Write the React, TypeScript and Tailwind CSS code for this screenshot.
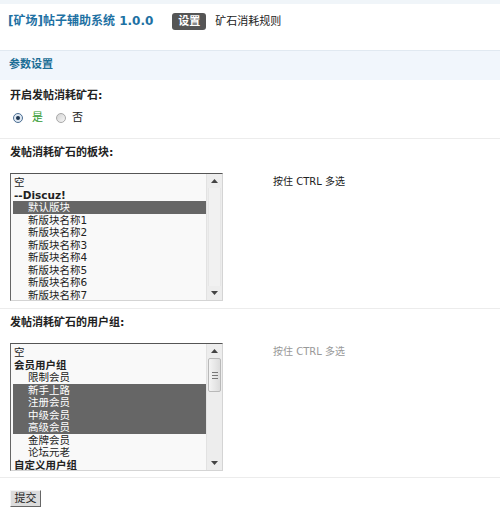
import React from "react";

type Opt = { label: string; indent?: boolean; bold?: boolean; selected?: boolean };

const forums: Opt[] = [
  { label: "空" },
  { label: "--Discuz!", bold: true },
  { label: "默认版块", indent: true, selected: true },
  { label: "新版块名称1", indent: true },
  { label: "新版块名称2", indent: true },
  { label: "新版块名称3", indent: true },
  { label: "新版块名称4", indent: true },
  { label: "新版块名称5", indent: true },
  { label: "新版块名称6", indent: true },
  { label: "新版块名称7", indent: true },
];

const groups: Opt[] = [
  { label: "空" },
  { label: "会员用户组", bold: true },
  { label: "限制会员", indent: true },
  { label: "新手上路", indent: true, selected: true },
  { label: "注册会员", indent: true, selected: true },
  { label: "中级会员", indent: true, selected: true },
  { label: "高级会员", indent: true, selected: true },
  { label: "金牌会员", indent: true },
  { label: "论坛元老", indent: true },
  { label: "自定义用户组", bold: true },
];

function Arrow({ up }: { up?: boolean }) {
  return (
    <div className="h-[14px] flex items-center justify-center">
      <svg width="7" height="4" viewBox="0 0 7 4">
        {up ? <path d="M0 4 L3.5 0 L7 4 Z" fill="#444" /> : <path d="M0 0 L3.5 4 L7 0 Z" fill="#444" />}
      </svg>
    </div>
  );
}

function ScrollBar({ thumb }: { thumb?: boolean }) {
  return (
    <div className="w-[16px] flex flex-col bg-[#ededed] border-l border-[#e2e2e2]">
      <Arrow up />
      <div className="flex-1 px-[1px]">
        {thumb ? (
          <div className="h-[34px] rounded-[2px] border border-[#b9b9b9] bg-gradient-to-r from-[#f4f4f4] to-[#dcdcdc] flex flex-col items-center justify-center gap-[2px]">
            <div className="w-[6px] h-[1px] bg-[#777]" />
            <div className="w-[6px] h-[1px] bg-[#777]" />
            <div className="w-[6px] h-[1px] bg-[#777]" />
          </div>
        ) : (
          <div className="h-full border-x border-[#e6e6e6] bg-[#f1f1f1]" />
        )}
      </div>
      <Arrow />
    </div>
  );
}

function ListBox({ options, thumb }: { options: Opt[]; thumb?: boolean }) {
  return (
    <div className="w-[213px] h-[128px] flex border-t border-l border-t-[#555] border-l-[#666] border-r border-b border-r-[#d4d4d4] border-b-[#d4d4d4] bg-[#f9f9f9]">
      <div className="flex-1 overflow-hidden pt-[2px] pl-[2px]">
        {options.map((o, i) => (
          <div
            key={i}
            className={`h-[12.5px] leading-[12.5px] text-[10.5px] whitespace-nowrap ${o.indent ? "pl-[15px]" : "pl-[1px]"} ${
              o.bold ? "font-bold" : ""
            } ${o.selected ? "bg-[#666] text-white" : "text-[#222]"}`}
          >
            {o.label}
          </div>
        ))}
      </div>
      <ScrollBar thumb={thumb} />
    </div>
  );
}

function Radio({ checked }: { checked?: boolean }) {
  return checked ? (
    <span className="w-[10px] h-[10px] rounded-full border border-[#4d6f93] bg-[#dfe8f2] flex items-center justify-center">
      <span className="w-[4px] h-[4px] rounded-full bg-[#1d3450]" />
    </span>
  ) : (
    <span className="block w-[10px] h-[10px] rounded-full border border-[#a9a9a9] bg-gradient-to-br from-[#d4d4d4] to-[#f6f6f6]" />
  );
}

export default function App() {
  return (
    <div className="w-[500px] h-[507px] overflow-hidden bg-white text-[#222] font-['DejaVu_Sans','Noto_Sans_CJK_SC',sans-serif]">
      <div className="h-[4px] bg-[#f0f5f9]" />

      {/* header */}
      <div className="mt-[9px] h-[17px] pl-[8px] flex items-center">
        <span className="text-[12px] font-bold text-[#1e71a3] leading-[17px]">[矿场]帖子辅助系统 1.0.0</span>
        <span className="ml-[19px] h-[17px] px-[6px] rounded-[3px] bg-[#555] text-white text-[11px] font-bold leading-[17px]">
          设置
        </span>
        <span className="ml-[9px] text-[11px] leading-[17px] text-[#222]">矿石消耗规则</span>
      </div>

      {/* section band */}
      <div className="mt-[20px] h-[30px] border-t border-[#e1e9f1] bg-[#f1f6fc] pl-[9px] flex items-center text-[11px] font-bold text-[#1c6e96]">
        参数设置
      </div>

      {/* switch */}
      <div className="mt-[10px] pl-[10px] h-[12px] leading-[12px] text-[11px] font-bold">开启发帖消耗矿石:</div>
      <div className="mt-[10px] h-[12px] pl-[13px] flex items-center text-[11px] leading-[12px]">
        <Radio checked />
        <span className="ml-[9px] text-[#2f9a2f]">是</span>
        <span className="ml-[13px] flex items-center">
          <Radio />
        </span>
        <span className="ml-[6px]">否</span>
      </div>
      <div className="mt-[14px] border-t border-[#ececec]" />

      {/* forums */}
      <div className="mt-[8px] pl-[10px] h-[12px] leading-[12px] text-[11px] font-bold">发帖消耗矿石的板块:</div>
      <div className="mt-[14px] pl-[10px] flex">
        <ListBox options={forums} />
        <div className="ml-[50px] mt-[3px] h-[12px] leading-[12px] text-[10px] text-[#222]">按住 CTRL 多选</div>
      </div>
      <div className="mt-[7px] border-t border-[#ececec]" />

      {/* user groups */}
      <div className="mt-[8px] pl-[10px] h-[12px] leading-[12px] text-[11px] font-bold">发帖消耗矿石的用户组:</div>
      <div className="mt-[14px] pl-[10px] flex">
        <ListBox options={groups} thumb />
        <div className="ml-[50px] mt-[3px] h-[12px] leading-[12px] text-[10px] text-[#999]">按住 CTRL 多选</div>
      </div>
      <div className="mt-[6px] border-t border-[#ececec]" />

      {/* submit */}
      <div className="mt-[7px] pl-[10px]">
        <button className="h-[17px] w-[31px] text-[11px] leading-[15px] text-[#222] bg-[#dcdcdc] border border-t-[#f4f4f4] border-l-[#f4f4f4] border-r-[#666] border-b-[#666]">
          提交
        </button>
      </div>
    </div>
  );
}
